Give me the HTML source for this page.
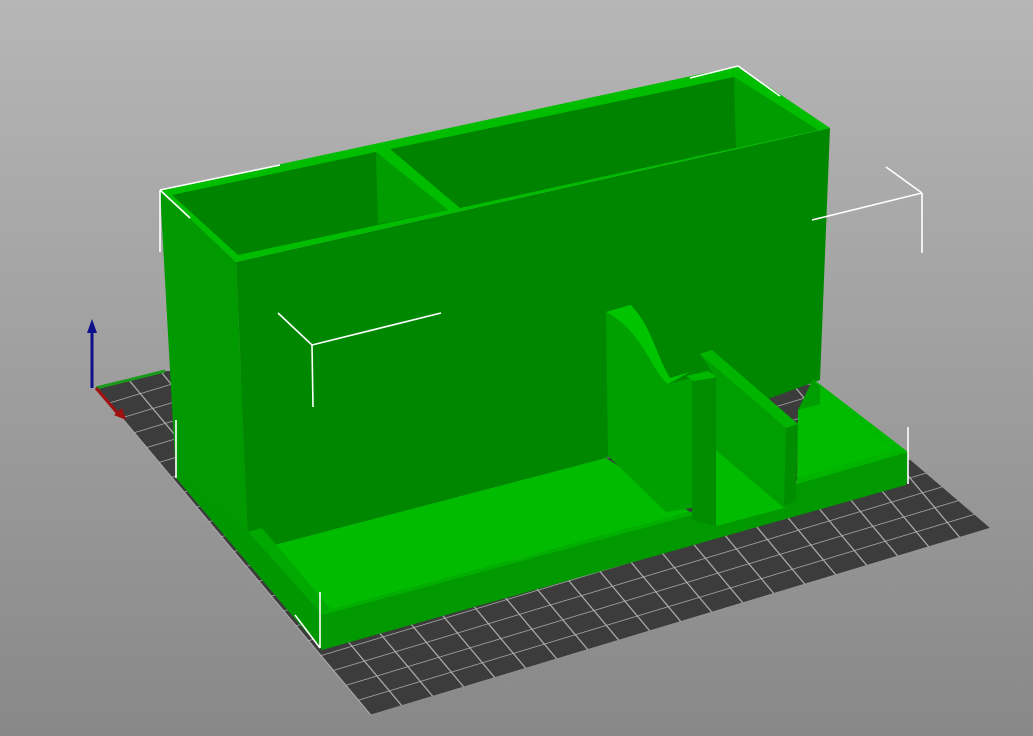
<!DOCTYPE html>
<html><head><meta charset="utf-8"><style>
html,body{margin:0;padding:0;width:1033px;height:736px;overflow:hidden}
svg{display:block}
</style></head><body>
<svg width="1033" height="736" viewBox="0 0 1033 736" xmlns="http://www.w3.org/2000/svg">
<defs>
<linearGradient id="bg" x1="0" y1="0" x2="0" y2="1">
<stop offset="0" stop-color="#b6b6b6"/><stop offset="1" stop-color="#888888"/>
</linearGradient>
<pattern id="grid" patternUnits="userSpaceOnUse" width="10" height="10" patternTransform="matrix(1.245 1.486 3.1 -0.935 96 388)">
<rect width="10" height="10" fill="#3c3c3c"/>
<path d="M0 0H10M0 0V10" stroke="#b4b4b4" stroke-width="0.8" fill="none"/>
</pattern>
</defs>
<rect width="1033" height="736" fill="url(#bg)"/>
<polygon points="96,388 166,371 820,385 908,458 990,528 370,715" fill="url(#grid)"/>
<line x1="96" y1="388" x2="165" y2="371" stroke="#1a9a1a" stroke-width="3"/>
<line x1="96" y1="388" x2="120" y2="416" stroke="#a01010" stroke-width="3"/>
<polygon points="114,415 126,420 122,408" fill="#a01010"/>
<line x1="92" y1="388" x2="92" y2="330" stroke="#10108a" stroke-width="3"/>
<polygon points="87,333 97,333 92,319" fill="#10108a"/>
<polygon points="160,190 236,262 248,532 176,478" fill="#009a00"/>
<polygon points="236,262 830,128 820,380 606,458 270,546 248,532" fill="#008700"/>
<polygon points="160,190 738,66 830,128 236,262" fill="#00bd00"/>
<polygon points="172,195 376,152 448,210 238,255" fill="#008400"/>
<polygon points="376,152 378,224 448,210" fill="#009c00"/>
<polygon points="390,149 734,77 818,130 460,208" fill="#008400"/>
<polygon points="734,77 736,148 818,130" fill="#009c00"/>
<polygon points="270,546 606,458 690,512 322,612" fill="#00bb00"/>
<polygon points="248,532 262,528 330,608 322,615" fill="#00a800"/>
<polygon points="176,478 248,532 322,615 322,650 296,620" fill="#009800"/>
<polygon points="322,612 906,457 906,485 322,650" fill="#009a00"/>
<polygon points="322,612 690,512 906,452 906,457 322,615" fill="#00b000"/>
<polygon points="606,312 608,456 666,512 692,508 692,378 668,384 652,340 632,305" fill="#00a000"/>
<path d="M606,312 L630,305 C650,322 658,360 670,378 L690,372 L668,384 C652,372 642,330 606,312 Z" fill="#00c400"/>
<polygon points="692,378 718,376 716,526 692,520" fill="#008d00"/>
<polygon points="686,376 708,371 718,377 694,381" fill="#00b800"/>
<polygon points="700,354 712,350 788,418 786,512 716,526 716,378" fill="#009e00"/>
<polygon points="716,450 784,508 716,526" fill="#00bb00"/>
<polygon points="700,354 712,350 798,424 786,428" fill="#00b400"/>
<polygon points="786,428 798,424 796,500 784,506" fill="#008d00"/>
<polygon points="798,410 820,387 895,450 797,482" fill="#00bb00"/>
<polygon points="813,379 820,387 820,404 798,410" fill="#009e00"/>
<polygon points="813,379 908,452 895,452 820,387" fill="#00b800"/>
<polygon points="797,478 895,450 908,452 797,484" fill="#00b400"/>
<polygon points="797,484 908,452 907,483 797,512" fill="#009a00"/>
<polygon points="716,526 798,505 798,512 720,530" fill="#009a00"/>
<g stroke="#ffffff" stroke-width="1.6" fill="none">
<path d="M160,190 V252 M160,190 L190,218 M160,190 L280,165"/>
<path d="M738,66 L690,78 M738,66 L780,96"/>
<path d="M312,345 L278,313 M312,345 L441,313 M312,345 L313,407"/>
<path d="M922,193 L886,167 M922,193 L812,220 M922,193 L922,253"/>
<path d="M176,478 V420"/>
<path d="M320,648 V592 M320,648 L295,615"/>
<path d="M908,484 V427"/>
</g>
</svg>
</body></html>
